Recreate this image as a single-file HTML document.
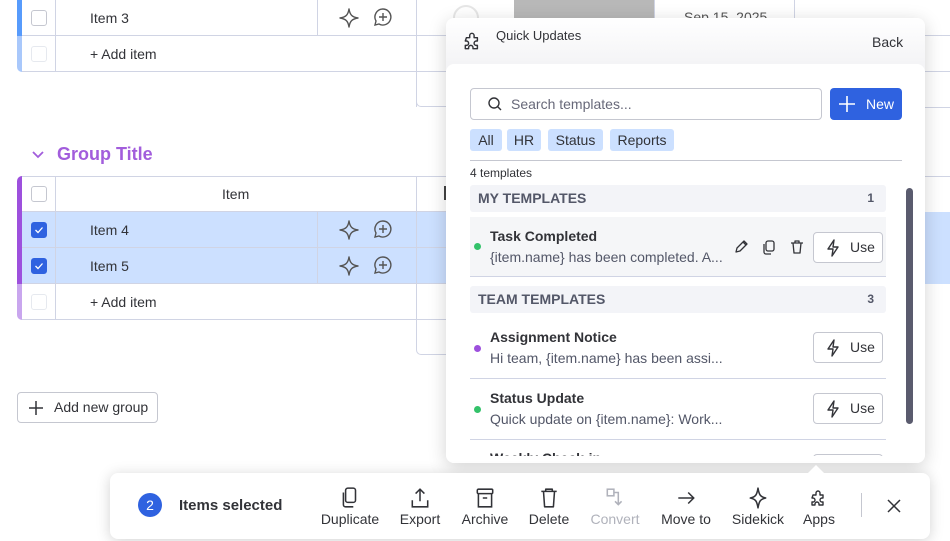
<!DOCTYPE html>
<html><head><meta charset="utf-8"><style>
*{box-sizing:border-box;margin:0;padding:0}
body{width:950px;height:541px;overflow:hidden;background:#fff;font-family:"Liberation Sans",sans-serif;color:#323338;position:relative}
.a{position:absolute}
.hl{position:absolute;height:1px;background:#d0d4e4}
.vl{position:absolute;width:1px;background:#d0d4e4}
.cb{position:absolute;width:16px;height:16px;border:1px solid #c5c7d0;border-radius:3px;background:#fff}
.cb.on{background:#2f62e0;border-color:#2f62e0}
.t14{font-size:14px}
.chip{position:absolute;top:129px;height:22px;background:#cce0ff;border-radius:3px;font-size:14px;line-height:22px;text-align:center;color:#323338}
.act{position:absolute;top:487px;width:70px;text-align:center;font-size:14px;color:#323338}
.act svg{display:block;margin:0 auto 2px}
.use{position:absolute;left:813px;width:70px;height:31px;border:1px solid #c5c7d0;border-radius:4px;font-size:14px;line-height:29px;padding-left:36px;background:#fff}
.use svg{position:absolute;left:10px;top:6px}
.sec{position:absolute;left:470px;width:416px;height:27px;background:#f3f4f8;border-radius:3px;font-size:14px;font-weight:bold;color:#535768;line-height:27px;padding:0 12px 0 8px}
.sec span{float:right;font-size:12px}
.tt{position:absolute;left:490px;font-size:14px;font-weight:bold;color:#323338}
.td{position:absolute;left:490px;font-size:14px;color:#535768}
.dot{position:absolute;left:474px;width:7px;height:7px;border-radius:50%}
</style></head><body>

<div class="a" style="left:17px;top:0;width:5px;height:36px;background:#579bfc"></div>
<div class="a" style="left:17px;top:36px;width:5px;height:36px;background:#a9c8fb;border-bottom-left-radius:5px"></div>
<div class="hl" style="left:22px;top:35px;width:424px"></div>
<div class="hl" style="left:22px;top:71px;width:424px"></div>
<div class="vl" style="left:55px;top:0;height:72px"></div>
<div class="vl" style="left:317px;top:0;height:36px"></div>
<div class="vl" style="left:416px;top:0;height:107px"></div>
<div class="a" style="left:416px;top:71px;width:40px;height:36px;border-left:1px solid #d0d4e4;border-bottom:1px solid #d0d4e4;border-bottom-left-radius:5px"></div>
<div class="cb" style="left:31px;top:10px"></div>
<div class="cb" style="left:31px;top:46px;border-color:#e6e9ef"></div>
<div class="a t14" style="left:90px;top:10px">Item 3</div>
<div class="a t14" style="left:90px;top:46px">+ Add item</div>

<div class="a" style="left:453px;top:5px;width:26px;height:26px;border:2px solid #e6e6e6;border-radius:50%"></div>
<div class="a" style="left:514px;top:0;width:140px;height:18px;background:#b8b8b8"></div>
<div class="vl" style="left:654px;top:0;height:18px"></div>
<div class="vl" style="left:794px;top:0;height:18px"></div>
<div class="a t14" style="left:684px;top:9px;color:#555">Sep 15, 2025</div>
<div class="hl" style="left:925px;top:35px;width:25px"></div>
<div class="hl" style="left:925px;top:71px;width:25px"></div>
<div class="hl" style="left:925px;top:107px;width:25px"></div>
<div class="hl" style="left:925px;top:176px;width:25px"></div>
<div class="a" style="left:925px;top:212px;width:25px;height:72px;background:#cce0ff"></div>

<svg class="a" style="left:31px;top:149px" width="14" height="12" viewBox="0 0 14 12"><path d="M2 3l5 5 5-5" fill="none" stroke="#a25ddc" stroke-width="1.8"/></svg>
<div class="a" style="left:57px;top:144px;font-size:18px;font-weight:bold;color:#a25ddc">Group Title</div>

<div class="a" style="left:17px;top:176px;width:5px;height:108px;background:#9d50dd;border-top-left-radius:5px"></div>
<div class="a" style="left:17px;top:284px;width:5px;height:36px;background:#c9a6ee;border-bottom-left-radius:5px"></div>
<div class="a" style="left:22px;top:212px;width:424px;height:72px;background:#cce0ff"></div>
<div class="hl" style="left:22px;top:176px;width:424px"></div>
<div class="hl" style="left:22px;top:211px;width:424px"></div>
<div class="hl" style="left:22px;top:247px;width:424px"></div>
<div class="hl" style="left:22px;top:283px;width:424px"></div>
<div class="hl" style="left:22px;top:319px;width:424px"></div>
<div class="vl" style="left:55px;top:176px;height:144px"></div>
<div class="vl" style="left:317px;top:212px;height:72px"></div>
<div class="vl" style="left:416px;top:176px;height:144px"></div>
<div class="a" style="left:416px;top:319px;width:40px;height:36px;border-left:1px solid #d0d4e4;border-bottom:1px solid #d0d4e4;border-bottom-left-radius:5px"></div>
<div class="a" style="left:444px;top:186px;width:2px;height:14px;background:#444"></div>
<div class="cb" style="left:31px;top:186px"></div>
<div class="cb on" style="left:31px;top:222px"><svg width="14" height="14" viewBox="0 0 14 14"><path d="M3.5 7l2.5 2.5 4.5-5" fill="none" stroke="#fff" stroke-width="1.3"/></svg></div>
<div class="cb on" style="left:31px;top:258px"><svg width="14" height="14" viewBox="0 0 14 14"><path d="M3.5 7l2.5 2.5 4.5-5" fill="none" stroke="#fff" stroke-width="1.3"/></svg></div>
<div class="cb" style="left:31px;top:294px;border-color:#e6e9ef"></div>
<div class="a t14" style="left:222px;top:186px">Item</div>
<div class="a t14" style="left:90px;top:222px">Item 4</div>
<div class="a t14" style="left:90px;top:258px">Item 5</div>
<div class="a t14" style="left:90px;top:294px">+ Add item</div>

<svg class="a" style="left:338px;top:7px" width="22" height="22" viewBox="0 0 22 22"><path d="M11 2C12 8 14 10 20 11 14 12 12 14 11 20 10 14 8 12 2 11 8 10 10 8 11 2Z" fill="none" stroke="#555" stroke-width="1.4" stroke-linejoin="round"/></svg>
<svg class="a" style="left:373px;top:7px" width="20" height="20" viewBox="0 0 20 20"><path d="M10 2a8 8 0 1 1-4 15L2 18l1-4A8 8 0 0 1 10 2Z M10 6v8 M6 10h8" fill="none" stroke="#555" stroke-width="1.4"/></svg>
<svg class="a" style="left:338px;top:219px" width="22" height="22" viewBox="0 0 22 22"><path d="M11 2C12 8 14 10 20 11 14 12 12 14 11 20 10 14 8 12 2 11 8 10 10 8 11 2Z" fill="none" stroke="#555" stroke-width="1.4" stroke-linejoin="round"/></svg>
<svg class="a" style="left:373px;top:219px" width="20" height="20" viewBox="0 0 20 20"><path d="M10 2a8 8 0 1 1-4 15L2 18l1-4A8 8 0 0 1 10 2Z M10 6v8 M6 10h8" fill="none" stroke="#555" stroke-width="1.4"/></svg>
<svg class="a" style="left:338px;top:255px" width="22" height="22" viewBox="0 0 22 22"><path d="M11 2C12 8 14 10 20 11 14 12 12 14 11 20 10 14 8 12 2 11 8 10 10 8 11 2Z" fill="none" stroke="#555" stroke-width="1.4" stroke-linejoin="round"/></svg>
<svg class="a" style="left:373px;top:255px" width="20" height="20" viewBox="0 0 20 20"><path d="M10 2a8 8 0 1 1-4 15L2 18l1-4A8 8 0 0 1 10 2Z M10 6v8 M6 10h8" fill="none" stroke="#555" stroke-width="1.4"/></svg>

<div class="a" style="left:17px;top:392px;width:141px;height:31px;border:1px solid #c5c7d0;border-radius:4px;font-size:14px;line-height:29px;padding-left:36px">Add new group</div>
<svg class="a" style="left:27px;top:399px" width="18" height="18" viewBox="0 0 18 18"><path d="M9 2v14M2 9h14" stroke="#323338" stroke-width="1.5"/></svg>

<div class="a" style="left:446px;top:18px;width:479px;height:445px;border-radius:8px;background:linear-gradient(#fff,#f4f4f6 46px);box-shadow:0 4px 18px rgba(0,0,0,.18)"></div>
<div class="a" style="left:446px;top:64px;width:479px;height:399px;border-radius:8px;background:#fff;overflow:hidden"></div>
<svg class="a" style="left:462px;top:30px" width="22" height="22" viewBox="0 0 20 20"><path d="M4 7h3V5a2 2 0 0 1 4 0v2h3v3h-1a2 2 0 0 0 0 4h1v3H10v-1a2 2 0 0 0-4 0v1H3v-3h1a2 2 0 0 0 0-4H3z" fill="none" stroke="#323338" stroke-width="1.3" stroke-linejoin="round"/></svg>
<div class="a" style="left:496px;top:28px;font-size:13px">Quick Updates</div>
<div class="a t14" style="left:872px;top:34px">Back</div>

<div class="a" style="left:470px;top:88px;width:352px;height:32px;border:1px solid #c5c7d0;border-radius:4px;font-size:14px;color:#676879;line-height:30px;padding-left:40px">Search templates...</div>
<svg class="a" style="left:487px;top:96px" width="16" height="16" viewBox="0 0 16 16"><circle cx="7" cy="7" r="5" fill="none" stroke="#323338" stroke-width="1.4"/><path d="M10.5 10.5l3.5 3.5" stroke="#323338" stroke-width="1.4"/></svg>
<div class="a" style="left:830px;top:88px;width:72px;height:32px;background:#2f62e0;border-radius:4px;color:#fff;font-size:14px;line-height:32px;padding-left:36px">New</div>
<svg class="a" style="left:838px;top:95px" width="18" height="18" viewBox="0 0 18 18"><path d="M9 1v16M1 9h16" stroke="#fff" stroke-width="1.6"/></svg>
<div class="chip" style="left:470px;width:32px">All</div>
<div class="chip" style="left:507px;width:34px">HR</div>
<div class="chip" style="left:548px;width:55px">Status</div>
<div class="chip" style="left:610px;width:64px">Reports</div>
<div class="hl" style="left:470px;top:160px;width:432px;background:#c5c7d0"></div>
<div class="a" style="left:470px;top:166px;font-size:12px">4 templates</div>

<div class="sec" style="top:185px">MY TEMPLATES<span>1</span></div>
<div class="a" style="left:470px;top:217px;width:416px;height:60px;background:#f5f6f8;border-bottom:1px solid #d0d4e4"></div>
<div class="dot" style="top:243px;background:#33c26a"></div>
<div class="tt" style="top:228px">Task Completed</div>
<div class="td" style="top:249px">{item.name} has been completed. A...</div>
<svg class="a" style="left:733px;top:239px" width="16" height="16" viewBox="0 0 16 16"><path d="M3 13l1-4 7-7 3 3-7 7zM10 3l3 3" fill="none" stroke="#323338" stroke-width="1.3" stroke-linejoin="round"/></svg>
<svg class="a" style="left:761px;top:239px" width="16" height="16" viewBox="0 0 16 16"><rect x="5" y="2" width="8" height="10" rx="2" fill="none" stroke="#323338" stroke-width="1.3"/><path d="M3 5v8a2 2 0 0 0 2 2h5" fill="none" stroke="#323338" stroke-width="1.3"/></svg>
<svg class="a" style="left:789px;top:239px" width="16" height="16" viewBox="0 0 16 16"><path d="M2 4h12M6 4V2h4v2M4 4l1 10h6l1-10" fill="none" stroke="#323338" stroke-width="1.3" stroke-linejoin="round"/></svg>
<div class="use" style="top:232px"><svg width="18" height="18" viewBox="0 0 18 18"><path d="M10 1L4 10h5l-1 7 6-9H9z" fill="none" stroke="#323338" stroke-width="1.4" stroke-linejoin="round"/></svg>Use</div>

<div class="sec" style="top:286px">TEAM TEMPLATES<span>3</span></div>
<div class="dot" style="top:345px;background:#9d50dd"></div>
<div class="tt" style="top:329px">Assignment Notice</div>
<div class="td" style="top:350px">Hi team, {item.name} has been assi...</div>
<div class="use" style="top:332px"><svg width="18" height="18" viewBox="0 0 18 18"><path d="M10 1L4 10h5l-1 7 6-9H9z" fill="none" stroke="#323338" stroke-width="1.4" stroke-linejoin="round"/></svg>Use</div>
<div class="hl" style="left:470px;top:378px;width:416px"></div>
<div class="dot" style="top:406px;background:#33c26a"></div>
<div class="tt" style="top:390px">Status Update</div>
<div class="td" style="top:411px">Quick update on {item.name}: Work...</div>
<div class="use" style="top:393px"><svg width="18" height="18" viewBox="0 0 18 18"><path d="M10 1L4 10h5l-1 7 6-9H9z" fill="none" stroke="#323338" stroke-width="1.4" stroke-linejoin="round"/></svg>Use</div>
<div class="hl" style="left:470px;top:439px;width:416px"></div>
<div class="a" style="left:446px;top:440px;width:479px;height:16px;overflow:hidden">
 <div class="a" style="left:44px;top:10px;font-size:14px;font-weight:bold">Weekly Check-in</div>
 <div class="a" style="left:367px;top:14px;width:70px;height:30px;border:1px solid #c5c7d0;border-radius:4px"></div>
</div>
<div class="a" style="left:906px;top:188px;width:7px;height:236px;background:#5a5b6e;border-radius:4px"></div>

<div class="a" style="left:110px;top:473px;width:820px;height:66px;background:#fff;border-radius:8px;box-shadow:0 2px 14px rgba(0,0,0,.18)"></div>
<div class="a" style="left:808px;top:465px;width:0;height:0;border-left:8px solid transparent;border-right:8px solid transparent;border-bottom:8px solid #fff"></div>
<div class="a" style="left:138px;top:493px;width:24px;height:24px;border-radius:50%;background:#2f62e0;color:#fff;font-size:14px;line-height:24px;text-align:center">2</div>
<div class="a" style="left:179px;top:497px;font-size:15px;font-weight:bold">Items selected</div>

<div class="act" style="left:315px"><svg width="20" height="22" viewBox="0 0 18 20"><rect x="5" y="1" width="9" height="13" rx="2" fill="none" stroke="#323338" stroke-width="1.4"/><path d="M3 5v11a2 2 0 0 0 2 2h7" fill="none" stroke="#323338" stroke-width="1.4"/></svg>Duplicate</div>
<div class="act" style="left:385px"><svg width="20" height="22" viewBox="0 0 18 20"><path d="M9 2v11M5 6l4-4 4 4M2 12v6h14v-6" fill="none" stroke="#323338" stroke-width="1.4"/></svg>Export</div>
<div class="act" style="left:450px"><svg width="20" height="22" viewBox="0 0 18 20"><rect x="2" y="2" width="14" height="4" rx="1" fill="none" stroke="#323338" stroke-width="1.4"/><path d="M3 6v12h12V6M7 10h4" fill="none" stroke="#323338" stroke-width="1.4"/></svg>Archive</div>
<div class="act" style="left:514px"><svg width="20" height="22" viewBox="0 0 18 20"><path d="M2 4h14M6 4V2h6v2M4 4l1 14h8l1-14" fill="none" stroke="#323338" stroke-width="1.4" stroke-linejoin="round"/></svg>Delete</div>
<div class="act" style="left:580px;color:#b0b2bb"><svg width="20" height="22" viewBox="0 0 18 20"><rect x="2" y="2" width="6" height="6" fill="none" stroke="#b0b2bb" stroke-width="1.4"/><path d="M8 5h4v11M9 13l3 3 3-3" fill="none" stroke="#b0b2bb" stroke-width="1.4"/></svg>Convert</div>
<div class="act" style="left:651px"><svg width="20" height="22" viewBox="0 0 18 20"><path d="M2 10h14M11 5l5 5-5 5" fill="none" stroke="#323338" stroke-width="1.4"/></svg>Move to</div>
<div class="act" style="left:723px"><svg width="20" height="22" viewBox="0 0 18 20"><path d="M9 1C10 7 11 9 16 10 11 11 10 13 9 19 8 13 7 11 2 10 7 9 8 7 9 1Z" fill="none" stroke="#323338" stroke-width="1.4" stroke-linejoin="round"/></svg>Sidekick</div>
<div class="act" style="left:784px"><svg width="20" height="22" viewBox="0 0 20 20"><path d="M4 7h3V5a2 2 0 0 1 4 0v2h3v3h-1a2 2 0 0 0 0 4h1v3H10v-1a2 2 0 0 0-4 0v1H3v-3h1a2 2 0 0 0 0-4H3z" fill="none" stroke="#323338" stroke-width="1.4" stroke-linejoin="round"/></svg>Apps</div>
<div class="a" style="left:861px;top:493px;width:1px;height:24px;background:#c5c7d0"></div>
<svg class="a" style="left:886px;top:498px" width="16" height="16" viewBox="0 0 16 16"><path d="M2 2l12 12M14 2L2 14" stroke="#323338" stroke-width="1.5"/></svg>
</body></html>
